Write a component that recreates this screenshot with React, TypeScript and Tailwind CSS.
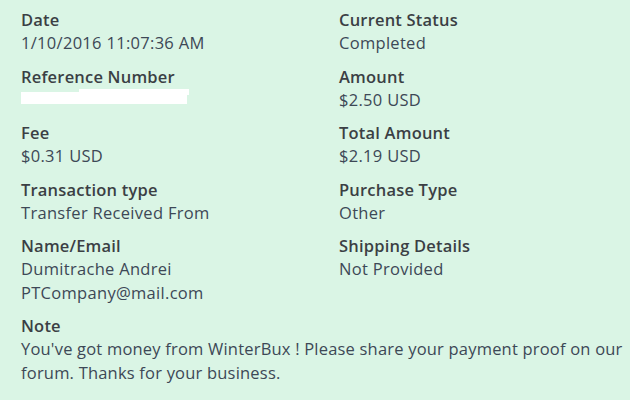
const rows: [string, string[], string, string[]][] = [
  ['Date', ['1/10/2016 11:07:36 AM'], 'Current Status', ['Completed']],
  ['Reference Number', [], 'Amount', ['$2.50 USD']],
  ['Fee', ['$0.31 USD'], 'Total Amount', ['$2.19 USD']],
  ['Transaction type', ['Transfer Received From'], 'Purchase Type', ['Other']],
  ['Name/Email', ['Dumitrache Andrei', 'PTCompany@mail.com'], 'Shipping Details', ['Not Provided']],
];

function Field({ label, values, redacted }: { label: string; values: string[]; redacted?: boolean }) {
  return (
    <div>
      <div className="font-semibold text-[#3b3f44] leading-[23px] tracking-[0.2px]">{label}</div>
      {redacted ? (
        <div className="relative h-[23px]">
          <div className="absolute left-0 top-[4px] h-[12px] w-[166px] bg-white" />
          <div className="absolute left-[58px] top-[1px] h-[6px] w-[110px] bg-white" />
        </div>
      ) : (
        values.map((v) => (
          <div key={v} className="leading-[23.5px] text-[#3d4856] tracking-[0.3px]">
            {v}
          </div>
        ))
      )}
    </div>
  );
}

export default function App() {
  return (
    <div
      className="w-[630px] h-[400px] bg-[#daf5e5] pt-[8px] pl-[21px] text-[16.5px]"
      style={{ fontFamily: '"Open Sans", "Liberation Sans", sans-serif' }}
    >
      <div className="flex flex-col gap-[10px]">
        {rows.map(([l1, v1, l2, v2]) => (
          <div key={l1} className="grid grid-cols-[318px_1fr]">
            <Field label={l1} values={v1} redacted={l1 === 'Reference Number'} />
            <Field label={l2} values={v2} />
          </div>
        ))}
        <div>
          <div className="font-semibold text-[#3b3f44] leading-[23px] tracking-[0.2px]">Note</div>
          <p className="leading-[24px] text-[#3d4856] tracking-[0.2px] pr-1">
            You've got money from WinterBux ! Please share your payment proof on our forum. Thanks for your business.
          </p>
        </div>
      </div>
    </div>
  );
}
